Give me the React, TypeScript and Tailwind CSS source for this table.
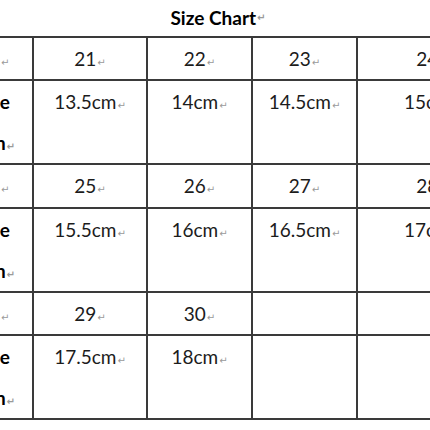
import { Fragment } from "react";

const rows = [
  { sizes: ["21", "22", "23", "24"], lengths: ["13.5cm", "14cm", "14.5cm", "15cm"] },
  { sizes: ["25", "26", "27", "28"], lengths: ["15.5cm", "16cm", "16.5cm", "17cm"] },
  { sizes: ["29", "30", "", ""], lengths: ["17.5cm", "18cm", "", ""] },
];

const Mark = () => (
  <span className="ml-[1px] align-baseline text-[10px] leading-none text-[#9a9a9a] [font-family:'DejaVu_Sans',sans-serif]">
    ↵
  </span>
);

const cell = "border-2 border-[#3a3a3a] p-0 align-top text-center";

export default function App() {
  return (
    <div className="h-[430px] w-[430px] overflow-hidden bg-white text-[#1c1c1c] [font-family:Lato,'Liberation_Sans',sans-serif]">
      <div className="flex h-[36px] items-center justify-center pl-[6px] text-[19px] font-bold text-black">
        Size Chart
        <Mark />
      </div>
      <table className="w-[507px] min-w-[507px] table-fixed border-collapse text-[19px]">
        <colgroup>
          <col className="w-[33px]" />
          <col className="w-[114px]" />
          <col className="w-[105px]" />
          <col className="w-[105px]" />
          <col className="w-[150px]" />
        </colgroup>
        <tbody>
          {rows.map((row, i) => (
            <Fragment key={i}>
              <tr>
                <td className={cell + " border-l-0"}>
                  <div
                    className={
                      "w-[32px] overflow-hidden pr-[25px] text-right leading-[41px] " +
                      (i === 1 ? "h-[42px]" : "h-[41px]")
                    }
                  >
                    <Mark />
                  </div>
                </td>
                {row.sizes.map((s, j) => (
                  <td key={j} className={cell}>
                    <div className={"leading-[41px] " + (i === 1 ? "h-[42px]" : "h-[41px]")}>
                      {s}
                      {s && <Mark />}
                    </div>
                  </td>
                ))}
              </tr>
              <tr>
                <td className={cell + " border-l-0"}>
                  <div className="flex h-[82px] w-[32px] flex-col items-end overflow-hidden font-bold text-black">
                    <div className="whitespace-nowrap pr-[22px] leading-[41px]">Size</div>
                    <div className="whitespace-nowrap pr-[17px] leading-[41px]">
                      Length
                      <Mark />
                    </div>
                  </div>
                </td>
                {row.lengths.map((l, j) => (
                  <td key={j} className={cell}>
                    <div className="h-[82px] leading-[41px]">
                      {l}
                      {l && <Mark />}
                    </div>
                  </td>
                ))}
              </tr>
            </Fragment>
          ))}
        </tbody>
      </table>
    </div>
  );
}
